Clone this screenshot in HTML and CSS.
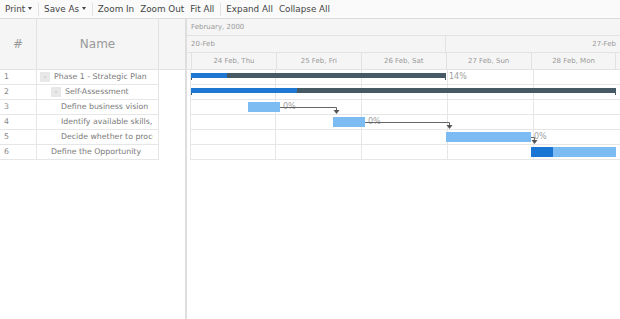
FILE: index.html
```html
<!DOCTYPE html>
<html lang="en">
<head>
    <meta charset="UTF-8">
    <title>Project Gantt</title>
    <link rel="stylesheet" href="styles.css">
</head>
<body>
    <!-- Toolbar -->
    <div class="toolbar">
        <span class="tb-btn">Print <span class="caret"></span></span>
        <span class="tb-sep"></span>
        <span class="tb-btn">Save As <span class="caret"></span></span>
        <span class="tb-sep"></span>
        <span class="tb-btn">Zoom In</span>
        <span class="tb-btn">Zoom Out</span>
        <span class="tb-btn">Fit All</span>
        <span class="tb-sep"></span>
        <span class="tb-btn">Expand All</span>
        <span class="tb-btn">Collapse All</span>
    </div>

    <div class="gantt">
        <!-- Data grid -->
        <div class="grid-pane">
            <div class="grid-head">
                <div class="col-num">#</div>
                <div class="col-name">Name</div>
                <div class="col-extra"></div>
            </div>
            <div class="grid-body">
                <div class="grid-row">
                    <div class="cell-num">1</div>
                    <div class="cell-name lvl-0"><span class="toggle">-</span><span class="name-text">Phase 1 - Strategic Plan</span></div>
                </div>
                <div class="grid-row">
                    <div class="cell-num">2</div>
                    <div class="cell-name lvl-1"><span class="toggle">-</span><span class="name-text">Self-Assessment</span></div>
                </div>
                <div class="grid-row">
                    <div class="cell-num">3</div>
                    <div class="cell-name leaf-2"><span class="name-text">Define business vision</span></div>
                </div>
                <div class="grid-row">
                    <div class="cell-num">4</div>
                    <div class="cell-name leaf-2"><span class="name-text">Identify available skills, information and support</span></div>
                </div>
                <div class="grid-row">
                    <div class="cell-num">5</div>
                    <div class="cell-name leaf-2"><span class="name-text">Decide whether to proceed</span></div>
                </div>
                <div class="grid-row">
                    <div class="cell-num">6</div>
                    <div class="cell-name leaf-0"><span class="name-text">Define the Opportunity</span></div>
                </div>
            </div>
        </div>

        <div class="splitter"></div>

        <!-- Timeline -->
        <div class="timeline">
            <div class="tl-month">February, 2000</div>
            <div class="tl-week">
                <div class="week">20-Feb</div>
                <div class="week week-next">27-Feb</div>
            </div>
            <div class="tl-days">
                <div class="day">24 Feb, Thu</div>
                <div class="day">25 Feb, Fri</div>
                <div class="day">26 Feb, Sat</div>
                <div class="day">27 Feb, Sun</div>
                <div class="day">28 Feb, Mon</div>
                <div class="day"></div>
            </div>

            <div class="tl-body">
                <div class="tl-row"></div>
                <div class="tl-row"></div>
                <div class="tl-row"></div>
                <div class="tl-row"></div>
                <div class="tl-row"></div>
                <div class="tl-row"></div>

                <!-- bars -->
                <div class="bar parent" style="left: 0; width: 255px; top: 3px;">
                    <div class="progress" style="width: 36px;"></div>
                </div>
                <div class="bar-label" style="left: 258px; top: 0;">14%</div>

                <div class="bar parent" style="left: 0; width: 425px; top: 18px;">
                    <div class="progress" style="width: 106px;"></div>
                </div>

                <div class="bar task" style="left: 57px; width: 32px; top: 32px;"></div>
                <div class="bar-label" style="left: 92px; top: 30px;">0%</div>

                <div class="bar task" style="left: 142px; width: 32px; top: 47px;"></div>
                <div class="bar-label" style="left: 177px; top: 45px;">0%</div>

                <div class="bar task" style="left: 255px; width: 85px; top: 62px;"></div>
                <div class="bar-label" style="left: 343px; top: 60px;">0%</div>

                <div class="bar task" style="left: 340px; width: 85px; top: 77px;">
                    <div class="progress" style="width: 22px;"></div>
                </div>

                <!-- connectors -->
                <svg class="links" width="429" height="90" viewBox="0 0 429 90">
                    <path d="M89 37.5 H145.5 V41 M174 52.5 H258.5 V56 M340 67.5 H343.5 V71" fill="none" stroke="#666" stroke-width="1"/>
                    <polygon points="142.5,40 148.5,40 145.5,44" fill="#555"/>
                    <polygon points="255.5,55 261.5,55 258.5,59" fill="#555"/>
                    <polygon points="340.5,70 346.5,70 343.5,74" fill="#555"/>
                </svg>
            </div>
        </div>
    </div>
</body>
</html>
```

FILE: styles.css
```css
/* Basic reset */
* {
    margin: 0;
    padding: 0;
    box-sizing: border-box;
}

body {
    font-family: "DejaVu Sans", Verdana, sans-serif;
    background-color: #fff;
    color: #444;
    width: 620px;
    height: 319px;
    overflow: hidden;
}

/* Toolbar */
.toolbar {
    display: flex;
    align-items: center;
    height: 19px;
    padding-left: 2px;
    background-color: #fafafa;
    border-bottom: 1px solid #dcdcdc;
    font-size: 8.8px;
    color: #444;
}

.tb-btn {
    padding: 0 3px;
    white-space: nowrap;
}

.caret {
    display: inline-block;
    width: 0;
    height: 0;
    border-left: 2.5px solid transparent;
    border-right: 2.5px solid transparent;
    border-top: 3px solid #444;
    vertical-align: 2px;
}

.tb-sep {
    width: 1px;
    height: 13px;
    margin: 0 2px 0 3px;
    background-color: #e2e2e2;
}

/* Layout */
.gantt {
    display: flex;
    height: 300px;
}

/* Data grid */
.grid-pane {
    width: 185px;
    flex-shrink: 0;
}

.grid-head {
    display: flex;
    height: 51px;
    background-color: #f5f5f5;
    border-bottom: 1px solid #e2e2e2;
    color: #999;
    font-size: 12px;
}

.col-num,
.col-name,
.col-extra {
    display: flex;
    align-items: center;
    justify-content: center;
}

.col-num {
    width: 37px;
    border-right: 1px solid #e2e2e2;
}

.col-name {
    width: 122px;
    border-right: 1px solid #e2e2e2;
}

.col-extra {
    flex: 1;
}

.grid-body {
    width: 159px;
}

.grid-row {
    display: flex;
    height: 15px;
    border-bottom: 1px solid #e6e6e6;
    font-size: 7.8px;
    line-height: 14px;
    color: #7a7a7a;
}

.cell-num {
    width: 37px;
    padding-left: 4px;
    border-right: 1px solid #e6e6e6;
    color: #888;
}

.cell-name {
    width: 122px;
    border-right: 1px solid #e6e6e6;
    padding-right: 5px;
    display: flex;
    align-items: center;
}

.name-text {
    flex: 1;
    min-width: 0;
    white-space: nowrap;
    overflow: hidden;
}

.toggle {
    display: inline-flex;
    align-items: center;
    justify-content: center;
    width: 10px;
    height: 10px;
    margin-right: 4px;
    flex-shrink: 0;
    background-color: #e8e8e8;
    color: #999;
    font-size: 7px;
    line-height: 1;
}

.lvl-0 { padding-left: 3px; }
.lvl-1 { padding-left: 14px; }
.leaf-2 { padding-left: 24px; }
.leaf-0 { padding-left: 14px; }

.splitter {
    width: 2px;
    flex-shrink: 0;
    background-color: #dedede;
}

/* Timeline */
.timeline {
    flex: 1;
    overflow: hidden;
    position: relative;
}

.tl-month,
.tl-week,
.tl-days {
    height: 17px;
    background-color: #f5f5f5;
    border-bottom: 1px solid #e2e2e2;
    font-size: 7px;
    line-height: 16px;
    color: #999;
}

.tl-month {
    padding-left: 4px;
}

.tl-week {
    display: flex;
}

.week {
    width: 259px;
    padding-left: 4px;
    border-right: 1px solid #e2e2e2;
    flex-shrink: 0;
}

.week-next {
    flex: 1;
    border-right: none;
    text-align: right;
    padding-right: 4px;
}

.tl-days {
    display: flex;
    padding-left: 4px;
}

.day {
    width: 84.9px;
    flex-shrink: 0;
    border-left: 1px solid #e2e2e2;
    text-align: center;
}

.tl-body {
    position: relative;
    margin-left: 3px;
    border-left: 1px solid #e6e6e6;
    height: 90px;
    background-image: repeating-linear-gradient(90deg, transparent 0 84.9px, #e6e6e6 84.9px 85.9px);
    background-position: -1px 0;
}

.tl-row {
    height: 15px;
    border-bottom: 1px solid #e6e6e6;
}

/* Bars */
.bar {
    position: absolute;
}

.bar.parent {
    height: 5px;
    background-color: #455a64;
}

.bar.parent::before,
.bar.parent::after {
    content: "";
    position: absolute;
    top: 5px;
    width: 1px;
    height: 2px;
    background-color: #455a64;
}

.bar.parent::before { left: 0; }
.bar.parent::after { right: 0; }

.bar.parent .progress {
    height: 5px;
    background-color: #1e78d2;
}

.bar.task {
    height: 10px;
    background-color: #7dbcf2;
}

.bar.task .progress {
    height: 10px;
    background-color: #1976d2;
}

.bar-label {
    position: absolute;
    font-size: 8px;
    line-height: 14px;
    color: #a0a0a0;
}

.links {
    position: absolute;
    left: 0;
    top: 0;
}
```
